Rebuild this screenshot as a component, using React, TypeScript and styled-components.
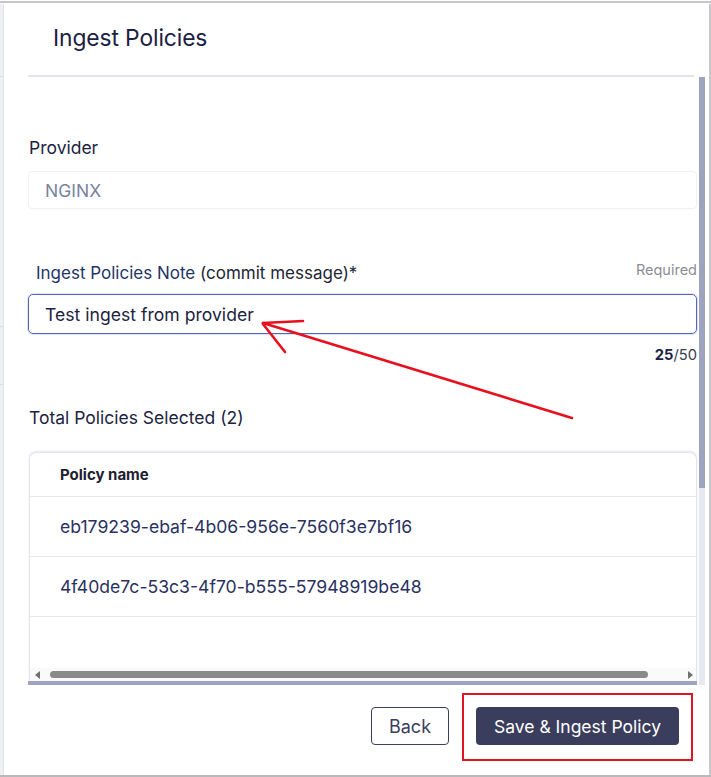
import React from "react";
import styled, { createGlobalStyle } from "styled-components";

const Global = createGlobalStyle`
  html, body { margin: 0; padding: 0; background: #ffffff; }
  body { font-family: Inter, "Noto Sans", "Liberation Sans", sans-serif; }
  * { box-sizing: border-box; }
`;

const Screen = styled.div`
  position: relative;
  width: 711px;
  height: 777px;
  overflow: hidden;
  display: flex;
  flex-direction: column;
  background: #ffffff;
`;

const TopEdge = styled.div`
  height: 3px;
  flex: none;
  border-top: 2px solid #c6c6c8;
  margin-top: 1px;
`;

const Stage = styled.div`
  flex: 1;
  display: flex;
  min-height: 0;
`;

const LeftStrip = styled.div`
  width: 4px;
  flex: none;
  background: #eff0f4;
  border-right: 1px solid #e2e3ea;
  display: flex;
  flex-direction: column;
`;

const StripLine = styled.div<{ $top: number }>`
  height: 1px;
  background: #dcdde3;
  margin-top: ${(p) => p.$top}px;
`;

const Modal = styled.div`
  flex: 1;
  display: flex;
  flex-direction: column;
  padding: 0 4px 0 24px;
  border-right: 2px solid #c8c8ca;
  min-width: 0;
`;

const Header = styled.div`
  height: 73px;
  flex: none;
  display: flex;
  align-items: center;
  padding-left: 25px;
  border-bottom: 2px solid #e3e4e8;
  margin-right: 11px;
`;

const Title = styled.h1`
  margin: 0 0 5px 0;
  font-size: 22.8px;
  font-weight: 400;
  color: #1b2142;
  letter-spacing: -0.1px;
`;

const BodyRow = styled.div`
  display: flex;
  height: 608px;
  flex: none;
`;

const Content = styled.div`
  flex: 1;
  display: flex;
  flex-direction: column;
  min-width: 0;
`;

const VScroll = styled.div`
  width: 6px;
  flex: none;
  margin-left: 2px;
  display: flex;
  flex-direction: column;
  background: #e7e9f2;
`;

const VThumb = styled.div`
  height: 411px;
  background: #9ea4c0;
`;

const Label = styled.div<{ $mt: number }>`
  margin-top: ${(p) => p.$mt}px;
  margin-left: 1px;
  font-size: 17.5px;
  line-height: 20px;
  color: #1c2340;
`;

const ReadOnlyBox = styled.div`
  margin-top: 13px;
  height: 38px;
  border: 1px solid #f0f1f4;
  border-radius: 4px;
  display: flex;
  align-items: center;
  padding-left: 16px;
  font-size: 17.5px;
  color: #7b819f;
`;

const NoteRow = styled.div`
  margin-top: 52px;
  display: flex;
  justify-content: space-between;
  align-items: flex-end;
`;

const NoteLabel = styled.div`
  margin-left: 8px;
  font-size: 17px;
  line-height: 20px;
  color: #222633;
`;

const NoteStrong = styled.span`
  color: #1f3468;
`;

const Required = styled.div`
  font-size: 14.5px;
  line-height: 18px;
  color: #8b8d96;
  margin-bottom: 4px;
`;

const TextInput = styled.div`
  margin-top: 11px;
  height: 40px;
  border: 1px solid #5466bd;
  border-radius: 5px;
  box-shadow: 0 0 0 1px #dfe3f3;
  display: flex;
  align-items: center;
  padding-left: 16px;
  font-size: 17.6px;
  color: #1c2340;
`;

const Counter = styled.div`
  margin-top: 12px;
  text-align: right;
  font-size: 14.7px;
  line-height: 18px;
  color: #3a3d4c;
`;

const CounterStrong = styled.b`
  color: #1c2340;
  font-weight: 700;
`;

const TableWrap = styled.div`
  margin-top: 24px;
  margin-left: 1px;
  height: 229px;
  border: 1px solid #e3e4ee;
  border-bottom: none;
  border-radius: 7px 7px 0 0;
  box-shadow: 0 -1px 2px rgba(150, 150, 200, 0.25);
  display: flex;
  flex-direction: column;
  overflow: hidden;
`;

const HeadCell = styled.div`
  height: 44px;
  flex: none;
  display: flex;
  align-items: center;
  padding-left: 30px;
  font-size: 15px;
  font-weight: 700;
  color: #1d2030;
  border-bottom: 1px solid #e6e7ef;
`;

const Cell = styled.div`
  height: 60px;
  flex: none;
  display: flex;
  align-items: center;
  padding-left: 30px;
  font-size: 17.6px;
  color: #2a3160;
  border-bottom: 1px solid #e6e7ef;
`;

const Filler = styled.div`
  flex: 1;
`;

const HScroll = styled.div`
  height: 13px;
  flex: none;
  background: #fafafb;
  display: flex;
  align-items: center;
  padding: 0 3px 0 5px;
`;

const Arrow = styled.div<{ $dir: "left" | "right" }>`
  width: 0;
  height: 0;
  border-top: 4px solid transparent;
  border-bottom: 4px solid transparent;
  ${(p) =>
    p.$dir === "left"
      ? "border-right: 5px solid #6f6f6f;"
      : "border-left: 5px solid #6f6f6f;"}
`;

const HThumb = styled.div`
  flex: 1;
  height: 7px;
  border-radius: 4px;
  background: #8a8a8a;
  margin: 0 40px 0 10px;
`;

const OuterHScroll = styled.div`
  height: 4px;
  background: #9ea4c0;
`;

const Footer = styled.div`
  flex: 1;
  display: flex;
  justify-content: flex-end;
  align-items: flex-start;
  padding-top: 8px;
  padding-right: 12px;
  gap: 13px;
`;

const BackButton = styled.button`
  height: 38px;
  width: 78px;
  border: 1px solid #3b3e5e;
  border-radius: 4px;
  background: #ffffff;
  color: #3b3e5e;
  font-family: inherit;
  font-size: 18px;
  margin-top: 14px;
`;

const Highlight = styled.div`
  border: 2px solid #e11422;
  padding: 12px 12px 14px 12px;
`;

const PrimaryButton = styled.button`
  height: 38px;
  width: 203px;
  border: none;
  border-radius: 4px;
  background: #3b3d5d;
  color: #ffffff;
  font-family: inherit;
  font-size: 17.5px;
  display: block;
`;

const BottomEdge = styled.div`
  height: 2px;
  flex: none;
  background: #b9b9bb;
`;

const Annotation = styled.svg`
  position: absolute;
  left: 0;
  top: 0;
  pointer-events: none;
`;

export default function App() {
  return (
    <>
      <Global />
      <Screen>
        <TopEdge />
        <Stage>
          <LeftStrip>
            <StripLine $top={72} />
            <StripLine $top={249} />
            <StripLine $top={57} />
          </LeftStrip>
          <Modal>
            <Header>
              <Title>Ingest Policies</Title>
            </Header>
            <BodyRow>
              <Content>
                <Label $mt={61}>Provider</Label>
                <ReadOnlyBox>NGINX</ReadOnlyBox>
                <NoteRow>
                  <NoteLabel>
                    <NoteStrong>Ingest Policies Note</NoteStrong> (commit message)*
                  </NoteLabel>
                  <Required>Required</Required>
                </NoteRow>
                <TextInput>Test ingest from provider</TextInput>
                <Counter>
                  <CounterStrong>25</CounterStrong>/50
                </Counter>
                <Label $mt={44}>Total Policies Selected (2)</Label>
                <TableWrap>
                  <HeadCell>Policy name</HeadCell>
                  <Cell>eb179239-ebaf-4b06-956e-7560f3e7bf16</Cell>
                  <Cell>4f40de7c-53c3-4f70-b555-57948919be48</Cell>
                  <Filler />
                  <HScroll>
                    <Arrow $dir="left" />
                    <HThumb />
                    <Arrow $dir="right" />
                  </HScroll>
                </TableWrap>
                <OuterHScroll />
              </Content>
              <VScroll>
                <VThumb />
              </VScroll>
            </BodyRow>
            <Footer>
              <BackButton>Back</BackButton>
              <Highlight>
                <PrimaryButton>Save &amp; Ingest Policy</PrimaryButton>
              </Highlight>
            </Footer>
          </Modal>
        </Stage>
        <BottomEdge />
        <Annotation width="711" height="777" viewBox="0 0 711 777">
          <g stroke="#e8101c" strokeWidth="2.6" strokeLinecap="round" fill="none">
            <line x1="263" y1="323" x2="572" y2="418" />
            <line x1="263" y1="323" x2="303" y2="321" />
            <line x1="263" y1="324" x2="285" y2="352" />
          </g>
        </Annotation>
      </Screen>
    </>
  );
}
